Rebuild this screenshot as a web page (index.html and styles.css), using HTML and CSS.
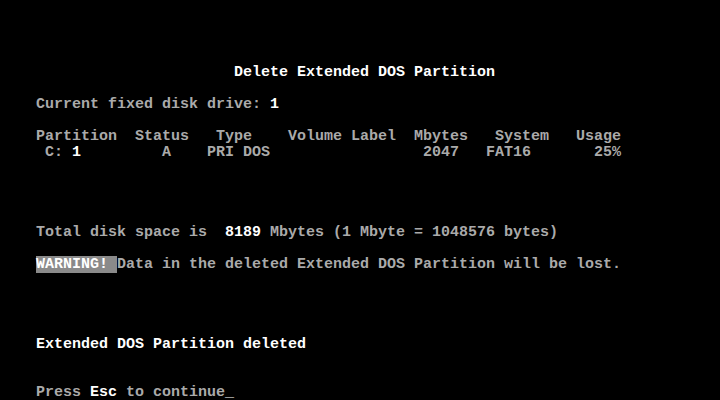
FILE: index.html
```html
<!DOCTYPE html>
<html lang="en">
<head>
    <meta charset="UTF-8">
    <meta name="viewport" content="width=device-width, initial-scale=1.0">
    <title>FDISK</title>
    <link rel="stylesheet" href="styles.css">
</head>
<body>
<pre class="screen">




                          <span class="hi">Delete Extended DOS Partition</span>

    Current fixed disk drive: <span class="hi">1</span>

    Partition  Status   Type    Volume Label  Mbytes   System   Usage
     C: <span class="hi">1</span>         A    PRI DOS                 2047   FAT16       25%




    Total disk space is  <span class="hi">8189</span> Mbytes (1 Mbyte = 1048576 bytes)

    <span class="warn">WARNING! </span>Data in the deleted Extended DOS Partition will be lost.




    <span class="hi">Extended DOS Partition deleted</span>


    Press <span class="hi">Esc</span> to continue<span class="hi cursor">_</span></pre>
</body>
</html>
```
FILE: styles.css
```css
html, body {
    margin: 0;
    padding: 0;
    background: #000;
}
.screen {
    box-sizing: border-box;
    margin: 0;
    padding-top: 1px;
    width: 720px;
    height: 400px;
    overflow: hidden;
    font-family: "Liberation Mono", "DejaVu Sans Mono", monospace;
    font-size: 15px;
    font-weight: bold;
    line-height: 16px;
    color: #aaaaaa;
}
.hi {
    color: #ffffff;
}
.warn {
    color: #ffffff;
    background: #8a8a8a;
}
```
